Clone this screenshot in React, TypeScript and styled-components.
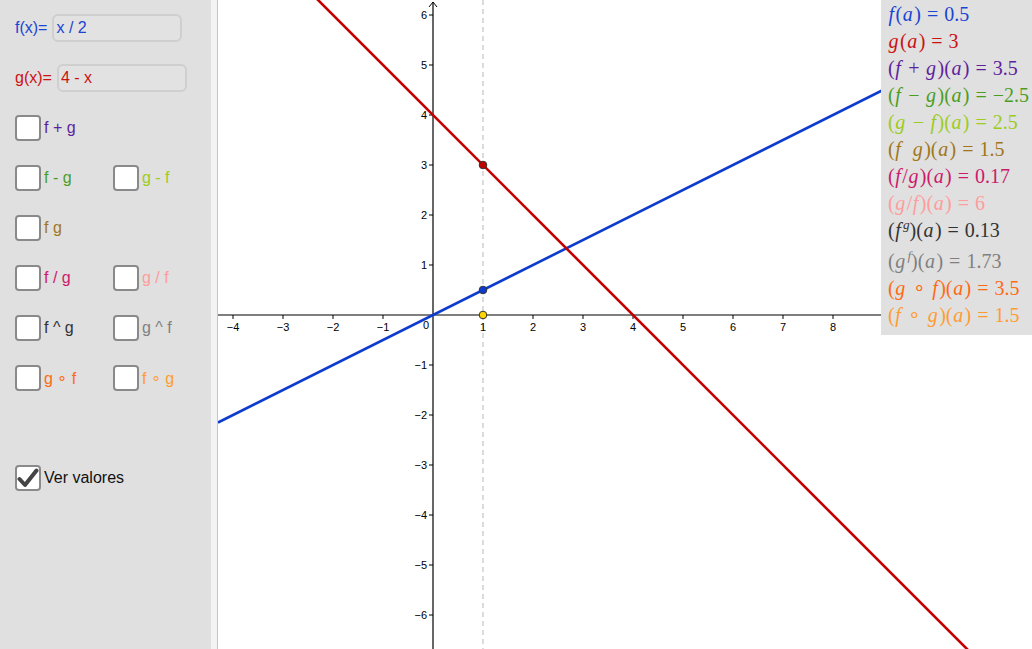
import React from 'react';
import styled, { createGlobalStyle } from 'styled-components';

const GlobalStyle = createGlobalStyle`
  html, body {
    margin: 0;
    padding: 0;
    overflow: hidden;
    background: #ffffff;
  }
`;

const colors = {
  f: '#1a44d4',
  g: '#cc1111',
  sum: '#5e1f9c',
  diff: '#4a9e1e',
  rdiff: '#9ccc1c',
  prod: '#a0761a',
  quot: '#cc1a6a',
  rquot: '#ff9c9c',
  pow: '#333333',
  rpow: '#808080',
  comp: '#ff6a10',
  rcomp: '#ff9c30',
};

// graph geometry (svg coords, origin of the svg at page x=218)
const graphW = 814;
const graphH = 649;
const ox = 215;
const oy = 315;
const unit = 50;
const px = (x: number) => ox + unit * x;
const py = (y: number) => oy - unit * y;
const xMin = -ox / unit;
const xMax = (graphW - ox) / unit;

type Check = { label: string; color: string };

const rows: Check[][] = [
  [{ label: 'f + g', color: colors.sum }],
  [
    { label: 'f - g', color: colors.diff },
    { label: 'g - f', color: colors.rdiff },
  ],
  [{ label: 'f g', color: colors.prod }],
  [
    { label: 'f / g', color: colors.quot },
    { label: 'g / f', color: colors.rquot },
  ],
  [
    { label: 'f ^ g', color: colors.pow },
    { label: 'g ^ f', color: colors.rpow },
  ],
  [
    { label: 'g \u2218 f', color: colors.comp },
    { label: 'f \u2218 g', color: colors.rcomp },
  ],
];

const CheckMark = () => (
  <svg width="22" height="22" viewBox="0 0 22 22">
    <path d="M2.5 12 L8 18 L19.5 3.5" fill="none" stroke="#444" strokeWidth="4" strokeLinecap="round" strokeLinejoin="round" />
  </svg>
);

const tickFont = "'Liberation Sans', Arial, sans-serif";

const Graph = () => {
  // labels past 8 sit under the values panel, so they are left out
  const xs: number[] = [];
  for (let k = -4; k <= 8; k++) if (k !== 0) xs.push(k);
  const ys: number[] = [];
  for (let k = -6; k <= 6; k++) if (k !== 0) ys.push(k);
  return (
    <svg width={graphW} height={graphH} viewBox={`0 0 ${graphW} ${graphH}`}>
      <line x1={px(1)} y1={0} x2={px(1)} y2={graphH} stroke="#dcdcdc" strokeWidth="2" strokeDasharray="5 4" />
      <line x1={0} y1={oy} x2={graphW} y2={oy} stroke="#000" strokeWidth="1.2" />
      <line x1={ox} y1={2} x2={ox} y2={graphH} stroke="#000" strokeWidth="1.2" />
      <path d={`M${ox - 4} ${7} L${ox} ${2} L${ox + 4} ${7}`} fill="none" stroke="#000" strokeWidth="1" />
      {xs.map((k) => (
        <g key={`x${k}`}>
          <line x1={px(k)} y1={oy} x2={px(k)} y2={oy + 4} stroke="#000" strokeWidth="1" />
          <text x={px(k)} y={oy + 16} fontSize="11" fontFamily={tickFont} textAnchor="middle" fill="#000">
            {k < 0 ? `\u2212${-k}` : k}
          </text>
        </g>
      ))}
      <text x={ox - 7} y={oy + 14} fontSize="11" fontFamily={tickFont} textAnchor="middle" fill="#000">
        0
      </text>
      {ys.map((k) => (
        <g key={`y${k}`}>
          <line x1={ox - 4} y1={py(k)} x2={ox} y2={py(k)} stroke="#000" strokeWidth="1" />
          <text x={ox - 6} y={py(k) + 4} fontSize="11" fontFamily={tickFont} textAnchor="end" fill="#000">
            {k < 0 ? `\u2212${-k}` : k}
          </text>
        </g>
      ))}
      <line x1={px(xMin)} y1={py(xMin / 2)} x2={px(xMax)} y2={py(xMax / 2)} stroke="#0d3bd0" strokeWidth="2.6" />
      <line x1={px(xMin)} y1={py(4 - xMin)} x2={px(xMax)} y2={py(4 - xMax)} stroke="#c40000" strokeWidth="2.6" />
      <circle cx={px(1)} cy={py(3)} r="3.8" fill="#c40000" stroke="#333" strokeWidth="1" />
      <circle cx={px(1)} cy={py(0.5)} r="3.8" fill="#0d3bd0" stroke="#333" strokeWidth="1" />
      <circle cx={px(1)} cy={py(0)} r="3.8" fill="#ffd400" stroke="#333" strokeWidth="1" />
    </svg>
  );
};

const I = styled.i`
  font-style: italic;
  margin: 0 0.07em 0 0.03em;
`;

const Op = styled.span`
  margin: 0 0.3em;
`;

const Sup = styled.sup`
  font-size: 0.66em;
  font-style: italic;
  vertical-align: 0.6em;
  line-height: 0;
  margin-left: 0.06em;
`;

const values: { color: string; lhs: React.ReactNode; rhs: string; extra?: number }[] = [
  { color: colors.f, lhs: <><I>f</I>(<I>a</I>)</>, rhs: '0.5' },
  { color: colors.g, lhs: <><I>g</I>(<I>a</I>)</>, rhs: '3' },
  { color: colors.sum, lhs: <>(<I>f</I><Op>+</Op><I>g</I>)(<I>a</I>)</>, rhs: '3.5' },
  { color: colors.diff, lhs: <>(<I>f</I><Op>{'\u2212'}</Op><I>g</I>)(<I>a</I>)</>, rhs: '\u22122.5' },
  { color: colors.rdiff, lhs: <>(<I>g</I><Op>{'\u2212'}</Op><I>f</I>)(<I>a</I>)</>, rhs: '2.5' },
  { color: colors.prod, lhs: <>(<I>f</I>&nbsp;&nbsp;<I>g</I>)(<I>a</I>)</>, rhs: '1.5' },
  { color: colors.quot, lhs: <>(<I>f</I>/<I>g</I>)(<I>a</I>)</>, rhs: '0.17' },
  { color: colors.rquot, lhs: <>(<I>g</I>/<I>f</I>)(<I>a</I>)</>, rhs: '6' },
  { color: colors.pow, lhs: <>(<I>f</I><Sup>g</Sup>)(<I>a</I>)</>, rhs: '0.13' },
  { color: colors.rpow, lhs: <>(<I>g</I><Sup>f</Sup>)(<I>a</I>)</>, rhs: '1.73', extra: 4 },
  { color: colors.comp, lhs: <>(<I>g</I><Op>{'\u2218'}</Op><I>f</I>)(<I>a</I>)</>, rhs: '3.5' },
  { color: colors.rcomp, lhs: <>(<I>f</I><Op>{'\u2218'}</Op><I>g</I>)(<I>a</I>)</>, rhs: '1.5' },
];

export default function App() {
  return (
    <>
      <GlobalStyle />
      <Page>
        <Sidebar>
          <Row>
            <FnLabel color={colors.f}>f(x)=</FnLabel>
            <FnInput color={colors.f}>x / 2</FnInput>
          </Row>
          <Row>
            <FnLabel color={colors.g}>g(x)=</FnLabel>
            <FnInput color={colors.g}>4 - x</FnInput>
          </Row>
          {rows.map((row, i) => (
            <Row key={i}>
              {row.map((c) => (
                <CheckCell key={c.label}>
                  <Box />
                  <CheckLabel color={c.color}>{c.label}</CheckLabel>
                </CheckCell>
              ))}
            </Row>
          ))}
          <Row />
          <Row>
            <CheckCell>
              <Box>
                <CheckMark />
              </Box>
              <CheckLabel color="#111">Ver valores</CheckLabel>
            </CheckCell>
          </Row>
        </Sidebar>
        <Splitter />
        <GraphArea>
          <Graph />
          <ValuesPanel>
            {values.map((v, i) => (
              <MathRow key={i} color={v.color} $extra={v.extra || 0}>
                {v.lhs}
                <Op>=</Op>
                {v.rhs}
              </MathRow>
            ))}
          </ValuesPanel>
        </GraphArea>
      </Page>
    </>
  );
}

const Page = styled.div`
  display: flex;
  width: 1032px;
  height: 649px;
  overflow: hidden;
  font-family: 'Liberation Sans', Arial, sans-serif;
`;

const Sidebar = styled.div`
  width: 211px;
  flex-shrink: 0;
  background: #e0e0e0;
  padding: 3px 0 0 15px;
  box-sizing: border-box;
  display: flex;
  flex-direction: column;
`;

const Row = styled.div`
  height: 50px;
  display: flex;
  align-items: center;
`;

const FnLabel = styled.span<{ color: string }>`
  color: ${(p) => p.color};
  font-size: 16px;
  margin-right: 5px;
`;

const FnInput = styled.div<{ color: string }>`
  width: 130px;
  height: 28px;
  box-sizing: border-box;
  border: 2px solid #cfcfcf;
  border-radius: 6px;
  background: #e2e2e2;
  color: ${(p) => p.color};
  font-size: 16px;
  padding-left: 2px;
  display: flex;
  align-items: center;
`;

const CheckCell = styled.div`
  width: 100px;
  display: flex;
  align-items: center;
`;

const Box = styled.div`
  width: 26px;
  height: 26px;
  box-sizing: border-box;
  border: 2px solid #8a8a8a;
  border-radius: 4px;
  background: #ffffff;
  display: flex;
  align-items: center;
  justify-content: center;
  flex-shrink: 0;
`;

const CheckLabel = styled.span<{ color: string }>`
  color: ${(p) => p.color};
  font-size: 16px;
  margin-left: 3px;
  white-space: nowrap;
`;

const Splitter = styled.div`
  width: 6px;
  flex-shrink: 0;
  background: #f3f3f3;
  border-right: 1px solid #c6c6c6;
`;

const GraphArea = styled.div`
  position: relative;
  flex: 1;
  background: #ffffff;
  overflow: hidden;
  svg {
    display: block;
  }
`;

const ValuesPanel = styled.div`
  position: absolute;
  top: 0;
  left: 663px;
  right: 0;
  height: 335px;
  background: #e0e0e0;
  padding: 1px 0 0 7px;
  box-sizing: border-box;
  font-family: 'Liberation Serif', 'Times New Roman', serif;
  font-size: 20px;
  white-space: nowrap;
  overflow: hidden;
`;

const MathRow = styled.div<{ color: string; $extra: number }>`
  color: ${(p) => p.color};
  height: 27px;
  line-height: 27px;
  margin-top: ${(p) => p.$extra}px;
`;
